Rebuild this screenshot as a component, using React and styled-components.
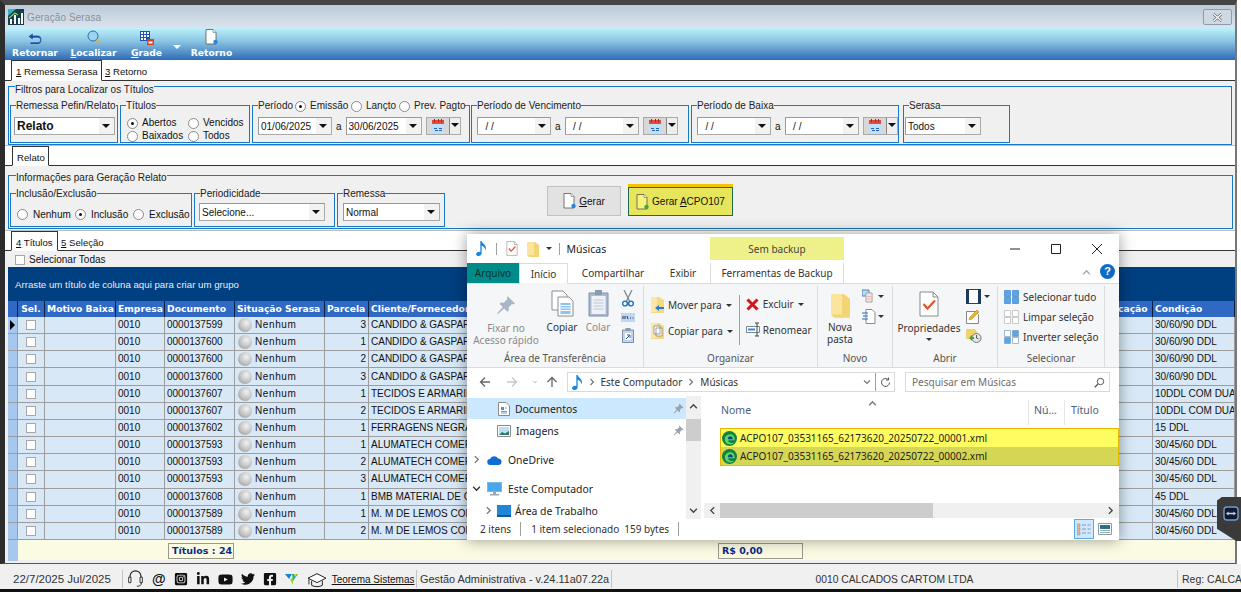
import React from 'react';
import styled, { createGlobalStyle } from 'styled-components';
import { FaLinkedinIn, FaYoutube, FaTwitter, FaFacebookSquare, FaInstagramSquare } from 'react-icons/fa';

const Global = createGlobalStyle`
  html, body { margin: 0; padding: 0; background: #fff; }
  * { box-sizing: border-box; }
  body { font-family: "Liberation Sans", Arial, sans-serif; font-size: 10px; color: #111; }
`;

const columns = '10px 27px 71px 49px 70px 90px 44px 251px 98px 86px 275px 74px 82px';

const rows = [
  ['0000137599', 3, 'CANDIDO & GASPAR LTDA', '30/60/90 DDL'],
  ['0000137600', 1, 'CANDIDO & GASPAR LTDA', '30/60/90 DDL'],
  ['0000137600', 2, 'CANDIDO & GASPAR LTDA', '30/60/90 DDL'],
  ['0000137600', 3, 'CANDIDO & GASPAR LTDA', '30/60/90 DDL'],
  ['0000137607', 1, 'TECIDOS E ARMARINHOS', '10DDL COM DUAS'],
  ['0000137607', 2, 'TECIDOS E ARMARINHOS', '10DDL COM DUAS'],
  ['0000137602', 1, 'FERRAGENS NEGRAO', '15 DDL'],
  ['0000137593', 1, 'ALUMATECH COMERCIO', '30/45/60 DDL'],
  ['0000137593', 2, 'ALUMATECH COMERCIO', '30/45/60 DDL'],
  ['0000137593', 3, 'ALUMATECH COMERCIO', '30/45/60 DDL'],
  ['0000137608', 1, 'BMB MATERIAL DE CONSTRUCAO', '45 DDL'],
  ['0000137589', 1, 'M. M DE LEMOS COMERCIO', '30/45/60 DDL'],
  ['0000137589', 2, 'M. M DE LEMOS COMERCIO', '30/45/60 DDL'],
];

const headers = ['', 'Sel.', 'Motivo Baixa', 'Empresa', 'Documento', 'Situação Serasa', 'Parcela', 'Cliente/Fornecedor', 'Vencimento', 'Valor', 'Observação', 'Classificação', 'Condição'];

/* ---------- icons ---------- */
const ReturnIcon = () => (
  <svg width="16" height="13" viewBox="0 0 16 13">
    <path d="M6 1 1 4.500 6 8V6h5a2 2 0 0 1 0 4H3v2.500h8a4.700 4.700 0 0 0 0-9.200H6z" fill="#1c4fa8" stroke="#dff" strokeWidth=".4" />
  </svg>
);
const SearchIcon = () => (
  <svg width="14" height="15" viewBox="0 0 14 15">
    <circle cx="6" cy="6" r="5" fill="#9fd2f2" stroke="#2d6ea8" />
    <path d="M9.500 9.800 13 13.800" stroke="#d9b13a" strokeWidth="2" />
  </svg>
);
const GridIcon = () => (
  <svg width="14" height="14" viewBox="0 0 14 14">
    <path d="M0 0h10v10H0z" fill="#1d55b5" />
    <path d="M1 1h2v2H1zM4 1h2v2H4zM7 1h2v2H7zM1 4h2v2H1zM4 4h2v2H4zM7 4h2v2H7zM1 7h2v2H1zM4 7h2v2H4z" fill="#fff" />
    <path d="M7 8h7v6H7z" fill="#e04020" />
    <path d="M8.500 10.500h4v2h-4z" fill="#fff" />
  </svg>
);
const DocIcon = ({ fill = '#fff', dot = '#2a86d8' }) => (
  <svg width="13" height="16" viewBox="0 0 13 16">
    <path d="M1 .5h7l3 3V15H1z" fill={fill} stroke="#555" strokeWidth=".8" />
    <path d="M8 .5v3h3" fill="#eee" stroke="#777" strokeWidth=".6" />
    <circle cx="10.500" cy="13" r="2.200" fill={dot} />
  </svg>
);
const CalendarIcon = () => (
  <svg width="14" height="14" viewBox="0 0 14 14">
    <path d="M1 1h12v13H1z" fill="#bfe0f8" />
    <path d="M1 1h12v4H1z" fill="#e14b3b" />
    <path d="M3 0h1v3H3zM7 0h1v3H7zM10 0h1v3h-1z" fill="#a22" />
    <path d="M3 9h3v1H3zM8 9h3v1H8zM4 11h3v1H4zM8 11h3v1H8z" fill="#2262b8" />
  </svg>
);
const LogoIcon = () => (
  <svg width="16" height="16" viewBox="0 0 16 16">
    <path d="M0 0h16v16H0z" fill="#15414f" />
    <path d="M0 0h8L0 7z" fill="#2fb6c9" />
    <path d="M2 10h2v5H2zM6 6h2v9H6zM10 9h2v6h-2zM13 4h2v11h-2z" fill="#fff" />
    <path d="M1 9l6-5 3 2" stroke="#8bd43c" strokeWidth="1.200" fill="none" />
  </svg>
);
const CloseGlyph = () => (
  <svg width="11" height="9" viewBox="0 0 11 9">
    <path d="M1.500 1 9.500 8M9.500 1l-8 7" stroke="#666" strokeWidth="2.600" />
    <path d="M1.500 1 9.500 8M9.500 1l-8 7" stroke="#fff" strokeWidth="1.200" />
  </svg>
);
const NoteIcon = ({ size = 16 }) => (
  <svg width={size * 0.7} height={size} viewBox="0 0 11 16">
    <path d="M4.500 0h1.400c.3 2.500 4.600 3.500 4.600 7.500 0 1-.3 1.700-.7 2.300.1-3-2.200-4-3.900-4.800V13c0 1.700-1.500 3-3.200 3C1.200 16 0 15.200 0 14c0-1.400 1.500-2.600 3-2.600.5 0 1 .1 1.500.3z" fill="#1787e0" />
  </svg>
);
const FolderIcon = ({ w = 12, h = 16 }) => (
  <svg width={w} height={h} viewBox="0 0 12 16">
    <path d="M0 1h8l4 3v12H2L0 14z" fill="#f4d574" />
    <path d="M0 1h7v13H0z" fill="#fbe59c" />
  </svg>
);
const CheckDoc = ({ w = 12, h = 15 }) => (
  <svg width={w} height={h} viewBox="0 0 20 26">
    <path d="M1 1h13l5 5v19H1z" fill="#fff" stroke="#8a8a8a" />
    <path d="M14 1v5h5" fill="none" stroke="#8a8a8a" />
    <path d="M4.500 13l4 4.500 7.500-8" fill="none" stroke="#e4552b" strokeWidth="2.200" />
  </svg>
);
const PinIcon = ({ size = 20, color = '#a9b6c8' }) => (
  <svg width={size} height={size} viewBox="0 0 20 20">
    <path d="M11.500 1 19 8.500l-2 1-1-.5-3.500 3.500.3 3-1.300 1.300-3.300-3.300L2 19l-.8-.8 5.500-6.300L3.500 8.700 4.800 7.400l3 .3L11.300 4.200 11 3z" fill={color} />
  </svg>
);
const CopyIcon = () => (
  <svg width="23" height="27" viewBox="0 0 23 27">
    <path d="M1 1h11l4 4v15H1z" fill="#fff" stroke="#8d8d8d" />
    <path d="M7 7h11l4 4v15H7z" fill="#fff" stroke="#8d8d8d" />
    <path d="M9.500 13h10v11h-10z" fill="#8ec0f0" />
    <path d="M9.500 15.500h10M9.500 18h10M9.500 20.500h10" stroke="#fff" />
  </svg>
);
const PasteIcon = () => (
  <svg width="21" height="27" viewBox="0 0 21 27">
    <path d="M1 3h19v23H1z" fill="#a9bcd4" stroke="#7e8fa6" />
    <path d="M3.500 6h14v18h-14z" fill="#eef2f7" />
    <path d="M7 0h7v5H7z" fill="#8b9aaf" />
    <path d="M5.500 10h10M5.500 13h10M5.500 16h10M5.500 19h10" stroke="#b9c7d8" />
  </svg>
);
const ScissorsIcon = () => (
  <svg width="12" height="17" viewBox="0 0 12 17">
    <path d="M2 0 7.500 11M10 0 4.500 11" stroke="#7d8a98" strokeWidth="1.300" />
    <circle cx="3" cy="13.500" r="2.400" fill="none" stroke="#1d6fc2" strokeWidth="1.400" />
    <circle cx="9" cy="13.500" r="2.400" fill="none" stroke="#1d6fc2" strokeWidth="1.400" />
  </svg>
);
const PathIcon = () => (
  <svg width="14" height="9" viewBox="0 0 14 9">
    <path d="M0 0h14v9H0z" fill="#bcd8f3" />
    <path d="M2 3v3M4 3v3M6 3l1 3M9 5h1M11.500 5h1" stroke="#335" />
  </svg>
);
const ShortcutIcon = () => (
  <svg width="12" height="15" viewBox="0 0 12 15">
    <path d="M.5 2h11v12.500H.5z" fill="#c7d3e2" stroke="#7e8fa6" />
    <path d="M3.500 0h5v3h-5z" fill="#8b9aaf" />
    <path d="M3 5h6v7H3z" fill="#fff" />
    <path d="M4 11l3.500-3.500M5 7h3v3" stroke="#1d5fae" fill="none" />
  </svg>
);
const MoveIcon = ({ copy }) => (
  <svg width="13" height="16" viewBox="0 0 13 16">
    <path d="M0 0h8l5 3v13H0z" fill="#f6d97e" />
    <path d="M0 0h6v15H0z" fill="#fbe7a6" />
    {copy ? (
      <path d="M3 3h6v8H3zM5 5h6v8H5z" fill="#fff" stroke="#778" strokeWidth=".7" />
    ) : (
      <path d="M4 11l4-3v2h5v2H8v2z" fill="#1f7fd6" />
    )}
  </svg>
);
const DeleteIcon = () => (
  <svg width="13" height="13" viewBox="0 0 13 13">
    <path d="M1.500 1.500l10 10M11.500 1.500l-10 10" stroke="#d4141c" strokeWidth="3" />
  </svg>
);
const RenameIcon = () => (
  <svg width="15" height="15" viewBox="0 0 15 15">
    <path d="M.5 4.500h13v6H.5z" fill="#fff" stroke="#7a8794" />
    <path d="M2 6.500h7v2H2z" fill="#3d8bd8" />
    <path d="M9 1h4M11 1v13M9 14h4" stroke="#444" />
  </svg>
);
const SmallCopy = () => (
  <svg width="14" height="14" viewBox="0 0 14 14">
    <path d="M0 1h7v6H0z" fill="#bcdcf6" stroke="#2a6fb5" strokeWidth=".8" />
    <path d="M4 4h6v9H4z" fill="#fff" stroke="#8a8a8a" strokeWidth=".8" />
    <path d="M6 5v7M8 5v7M4.500 7.500h5M4.500 10h5" stroke="#e8a0a0" strokeWidth=".6" />
  </svg>
);
const SmallDoc = () => (
  <svg width="14" height="15" viewBox="0 0 14 15">
    <path d="M4 .5h6l3 3V14.500H4z" fill="#fff" stroke="#8a8a8a" />
    <path d="M0 4h6M1 7h5M0 10h6" stroke="#2070c0" strokeWidth="1" />
  </svg>
);
const SelectBookIcon = () => (
  <svg width="15" height="15" viewBox="0 0 15 15">
    <path d="M.5.500h14v14H.5z" fill="#fff" stroke="#2b3f5c" />
    <path d="M0 0h3v15H0zM12 0h3v15h-3z" fill="#1e3a5f" />
  </svg>
);
const EditIcon = () => (
  <svg width="14" height="15" viewBox="0 0 14 15">
    <path d="M.5 2.500h9l3 3v9H.5z" fill="#fff" stroke="#888" />
    <path d="M3 11l1-3 7-7 2 2-7 7z" fill="#f0b42c" stroke="#b07d10" strokeWidth=".5" />
  </svg>
);
const HistoryIcon = () => (
  <svg width="16" height="14" viewBox="0 0 16 14">
    <path d="M0 0h9l2 3v7H0z" fill="#f1d36d" />
    <circle cx="10.500" cy="9" r="4.500" fill="#e6e6e6" stroke="#777" />
    <path d="M10.500 6v3l2 1" stroke="#555" fill="none" />
    <path d="M3 9l3-3v2h2v2H6v2z" fill="#3fa33f" />
  </svg>
);
const SelectGrid = ({ a = '#5aa5e6', b = '#5aa5e6', c = '#5aa5e6', d = '#5aa5e6', line = '#3c86cf' }) => (
  <svg width="15" height="14" viewBox="0 0 15 14">
    <path d="M.5.500h6v6h-6z" fill={a} stroke={line} strokeWidth=".7" />
    <path d="M8.500.500h6v6h-6z" fill={b} stroke={line} strokeWidth=".7" />
    <path d="M.5 7.500h6v6h-6z" fill={c} stroke={line} strokeWidth=".7" />
    <path d="M8.500 7.500h6v6h-6z" fill={d} stroke={line} strokeWidth=".7" />
  </svg>
);
const ArrowBack = ({ color = '#666', rotate = 0 }) => (
  <svg width="12" height="12" viewBox="0 0 12 12" style={{ transform: `rotate(${rotate}deg)` }}>
    <path d="M11 6H1.500M6 1.500 1.500 6 6 10.500" fill="none" stroke={color} strokeWidth="1.300" />
  </svg>
);
const Chevron = ({ rotate = 0, size = 8, color = '#777' }) => (
  <svg width={size} height={size} viewBox="0 0 8 8" style={{ transform: `rotate(${rotate}deg)` }}>
    <path d="M2.500 1 5.500 4 2.500 7" fill="none" stroke={color} strokeWidth="1.200" />
  </svg>
);
const RefreshIcon = () => (
  <svg width="11" height="11" viewBox="0 0 11 11">
    <path d="M9.500 5.500a4 4 0 1 1-1.300-3M8.500.5v2.500H6" fill="none" stroke="#555" strokeWidth="1" />
  </svg>
);
const MagnifyIcon = () => (
  <svg width="11" height="11" viewBox="0 0 11 11">
    <circle cx="6.500" cy="4.500" r="3.200" fill="none" stroke="#555" />
    <path d="M4 7 .8 10.200" stroke="#555" strokeWidth="1.300" />
  </svg>
);
const DocsNavIcon = () => (
  <svg width="12" height="14" viewBox="0 0 12 14">
    <path d="M.5.500h7.500l3.500 3.500v9.500H.5z" fill="#fff" stroke="#8a8a8a" />
    <path d="M3 5h3v3H3z" fill="#3d97e0" />
    <path d="M3 9.500h6M3 11h6M7 6h2" stroke="#5aa5e6" />
  </svg>
);
const PictureIcon = () => (
  <svg width="14" height="12" viewBox="0 0 14 12">
    <path d="M.5.500h13v11H.5z" fill="#fff" stroke="#8a8a8a" />
    <path d="M2 2h10v8H2z" fill="#bfe0f4" />
    <path d="M2 10l3-3 3 1.500L12 6v4z" fill="#2f7b6a" />
  </svg>
);
const CloudIcon = () => (
  <svg width="15" height="10" viewBox="0 0 15 10">
    <path d="M3.500 10a3 3 0 0 1-.5-6A4.500 4.500 0 0 1 11 3.500 3.300 3.300 0 0 1 12 10z" fill="#0a6fd0" />
  </svg>
);
const MonitorIcon = () => (
  <svg width="15" height="14" viewBox="0 0 15 14">
    <path d="M0 0h15v10H0z" fill="#78b8ec" />
    <path d="M1 1h13v8H1z" fill="#4aa7ec" />
    <path d="M6 10h3v2H6zM3 12h9v1.500H3z" fill="#9aa6b2" />
  </svg>
);
const DesktopIcon = () => (
  <svg width="14" height="12" viewBox="0 0 14 12">
    <path d="M0 0h14v10H0z" fill="#1f86d8" />
    <path d="M0 10h14v2H0z" fill="#0b5a9e" />
  </svg>
);
const EdgeIcon = () => (
  <svg width="15" height="15" viewBox="0 0 15 15">
    <circle cx="7.500" cy="7.500" r="7.500" fill="#12823c" />
    <path d="M12.500 9.300c.8-2.800-.8-5.300-3.300-6C6.700 2.700 4 4 3 6.500 2.200 9 3.400 12 6 13c2.500 1 5 .2 6.300-1.500-2.400 1-5 .5-5.800-1-.4-.8-.2-1.200.3-1.200z" fill="#5fd36b" />
    <path d="M6 8.200c-.2-2 1.300-3 2.800-2.800 1.400.2 2.200 1.300 2 2.800z" fill="#0b4a86" />
  </svg>
);
const DetailsIcon = () => (
  <svg width="14" height="13" viewBox="0 0 14 13">
    <path d="M0 1h3v3H0zM0 5h3v3H0zM0 9h3v3H0z" fill="#e2b7a3" stroke="#9a8a80" strokeWidth=".5" />
    <path d="M5 2h4M5 6h4M5 10h4M10.500 2h3M10.500 6h3M10.500 10h3" stroke="#8a97a6" />
  </svg>
);
const LargeIcon = () => (
  <svg width="14" height="12" viewBox="0 0 14 12">
    <path d="M.5.500h13v11H.5z" fill="#fff" stroke="#8a9aaa" />
    <path d="M2 2h10v4H2z" fill="#2a6f8f" />
    <path d="M2 7.500h10M2 9.500h10" stroke="#9aa" />
  </svg>
);
const HeadsetIcon = () => (
  <svg width="17" height="20" viewBox="0 0 17 22">
    <path d="M2.500 12V8a6 6 0 0 1 12 0v4" fill="none" stroke="#222" strokeWidth="1.300" />
    <path d="M1 9h2.500v6H1zM13.500 9H16v6h-2.500z" fill="#fff" stroke="#222" />
    <path d="M15 15c0 3-2 4-5 4" fill="none" stroke="#222" />
  </svg>
);
const TeoremaLogo = () => (
  <svg width="13" height="11" viewBox="0 0 13 11">
    <path d="M0 0h7L4 5z" fill="#0f86d8" />
    <path d="M7 0h6L8 7z" fill="#15b3a0" />
    <path d="M5 5l3-1 0 7z" fill="#9cc92e" />
    <path d="M9 0h3l-2 3z" fill="#f0d020" />
  </svg>
);
const CapIcon = () => (
  <svg width="22" height="17" viewBox="0 0 22 19">
    <path d="M11 3 1 8l10 5 10-5z" fill="#fff" stroke="#222" strokeWidth="1.100" />
    <path d="M5 11v5c3 2 9 2 12 0v-5" fill="none" stroke="#222" strokeWidth="1.100" />
    <path d="M2 9v6" stroke="#222" />
  </svg>
);
const ViewerIcon = () => (
  <svg width="16" height="15" viewBox="0 0 16 15">
    <rect x="1" y="1" width="14" height="13" rx="3" fill="#101a2c" stroke="#6f9bcf" strokeWidth="1.400" />
    <path d="M3 7.500 5.500 5.500v1.200h5V5.500L13 7.500l-2.500 2V8.300h-5v1.200z" fill="#c3d4ea" />
  </svg>
);

/* ---------- main window ---------- */
const Screen = styled.div`
  position: relative;
  width: 1241px;
  height: 592px;
  overflow: hidden;
  background: #fff;
  display: flex;
  flex-direction: column;
`;
const Win = styled.div`
  width: 1237px;
  height: 564px;
  flex: none;
  border-top: 5px solid #444;
  border-left: 5px solid #2c2c2c;
  border-right: 2px solid #777;
  border-bottom: 1px solid #555;
  background: #f0f0f0;
  display: flex;
  flex-direction: column;
`;
const TitleBar = styled.div`
  height: 23px;
  flex: none;
  background: linear-gradient(#bccad7, #dae4ee);
  display: flex;
  align-items: center;
  padding: 1px 3px 0 3px;
  color: #8a9098;
  gap: 3px;
`;
const TitleText = styled.span`
  font-size: 10px;
  letter-spacing: 0.1px;
  flex: 1;
`;
const CloseBtn = styled.div`
  width: 29px;
  height: 16px;
  border: 1px solid #8c9db0;
  border-radius: 2px;
  background: #ced9e4;
  display: flex;
  align-items: center;
  justify-content: center;
`;
const Toolbar = styled.div`
  height: 32px;
  flex: none;
  background: linear-gradient(#bdf1fb, #8cc6e4 40%, #2e6bb6);
  display: flex;
  padding-left: 7px;
`;
const ToolItem = styled.div`
  width: ${p => p.$w}px;
  margin-right: ${p => p.$mr || 0}px;
  display: flex;
  flex-direction: column;
  align-items: center;
  justify-content: flex-end;
  gap: 2px;
  height: 30px;
  color: #fff;
  font: bold 9.200px "DejaVu Sans", sans-serif;
  white-space: nowrap;
  u { text-decoration-thickness: 1px; }
`;
const DropMark = styled.div`
  width: 0;
  height: 0;
  border-left: 4px solid transparent;
  border-right: 4px solid transparent;
  border-top: 4px solid #fff;
  margin: 17px 10px 0 0;
`;
const TabStrip = styled.div`
  height: ${p => p.$h}px;
  flex: none;
  background: #fff;
  border-bottom: 1px solid #333;
  display: flex;
  align-items: flex-end;
  padding-left: ${p => p.$left}px;
  gap: ${p => p.$gap || 0}px;
`;
const Tab = styled.div`
  height: ${p => (p.$active ? 'calc(100% + 1px)' : '100%')};
  margin-bottom: ${p => (p.$active ? '-1px' : '0')};
  width: ${p => p.$w}px;
  padding: ${p => (p.$active ? '3px 0 0 4px' : '4px 0 0 0')};
  font-size: 9.600px;
  white-space: nowrap;
  line-height: 15px;
  background: #fff;
  border: ${p => (p.$active ? '1px solid #333' : 'none')};
  border-bottom: ${p => (p.$active ? '1px solid #fff' : 'none')};
`;
const Panel = styled.div`
  height: 65px;
  flex: none;
  background: #f0f0f0;
  border-bottom: 1px solid #bbb;
  padding: 0 2px 0 3px;
`;
const Group = styled.fieldset`
  margin: ${p => p.$mt || 0}px 0 0 ${p => p.$ml || 0}px;
  padding: ${p => p.$pad || '0'};
  width: ${p => p.$w}px;
  height: ${p => p.$h}px;
  min-width: 0;
  flex: none;
  border: 1.500px solid #1878c8;
`;
const Legend = styled.legend`
  padding: 0;
  margin-left: ${p => p.$ml || 5}px;
  font-size: 10px;
  height: ${p => p.$h || 13}px;
  line-height: ${p => p.$lh || 14}px;
  color: #222;
  white-space: nowrap;
`;
const RowBoxes = styled.div`
  display: flex;
  gap: 2px;
  padding-top: ${p => p.$top || 0}px;
  align-items: flex-start;
`;
const Combo = styled.div`
  width: ${p => p.$w}px;
  height: 18px;
  flex: none;
  background: #fff;
  border: 1px solid #aaa;
  border-top-color: #999;
  border-left-color: #999;
  display: flex;
  align-items: center;
  justify-content: space-between;
  padding-left: 2px;
  font-size: ${p => (p.$bold ? 12 : 10)}px;
  font-weight: ${p => (p.$bold ? 'bold' : 'normal')};
  white-space: pre;
`;
const ComboArrow = styled.div`
  width: 15px;
  height: 16px;
  background: #f2f2f2;
  position: relative;
  &:after {
    content: '';
    position: absolute;
    left: 3px;
    top: 6px;
    border-left: 4px solid transparent;
    border-right: 4px solid transparent;
    border-top: 4px solid #111;
  }
`;
const DateSep = styled.span`
  font-size: 10px;
`;
const DateRow = styled.div`
  display: flex;
  align-items: center;
  gap: 4px;
  padding: ${p => p.$top ?? 5}px 0 0 ${p => p.$left || 5}px;
`;
const CalBtn = styled.div`
  width: 35px;
  height: 18px;
  flex: none;
  background: #d8d8d8;
  border: 1px solid #aaa;
  display: flex;
`;
const CalFace = styled.div`
  width: 23px;
  display: flex;
  align-items: center;
  justify-content: center;
  border-right: 1px solid #888;
`;
const CalArrow = styled.div`
  flex: 1;
  background: #eee;
  position: relative;
  &:after {
    content: '';
    position: absolute;
    left: 1px;
    top: 5px;
    border-left: 4px solid transparent;
    border-right: 4px solid transparent;
    border-top: 4px solid #111;
  }
`;
const RadioLabel = styled.span`
  display: inline-flex;
  align-items: center;
  gap: ${p => p.$gap || 4}px;
  font-size: 10px;
  white-space: nowrap;
`;
const RadioDot = styled.i`
  width: 11px;
  height: 11px;
  flex: none;
  display: inline-block;
  border-radius: 50%;
  background: #fff;
  border: 1px solid #8a8a8a;
  position: relative;
  &:after {
    content: '';
    display: ${p => (p.$on ? 'block' : 'none')};
    position: absolute;
    left: 3px;
    top: 3px;
    width: 3px;
    height: 3px;
    border-radius: 50%;
    background: #111;
  }
`;
const Radio = ({ on, gap, children }) => (
  <RadioLabel $gap={gap}>
    <RadioDot $on={on} />
    {children}
  </RadioLabel>
);
const RadioGrid = styled.div`
  display: grid;
  grid-template-columns: 61px 1fr;
  row-gap: 1px;
  padding: 5px 0 0 6px;
  line-height: 12px;
`;
const RadioRow = styled.div`
  display: grid;
  grid-template-columns: 58px 58px 1fr;
  padding: 9px 0 0 6px;
`;
const LegendRadios = styled.span`
  display: inline-grid;
  grid-template-columns: 37px 56px 48px 66px;
  align-items: center;
`;
const Action = styled.div`
  height: ${p => (p.$hot ? 29 : 30)}px;
  width: ${p => p.$w}px;
  flex: none;
  margin: ${p => p.$mt}px 0 0 ${p => p.$ml}px;
  display: flex;
  align-items: center;
  justify-content: center;
  gap: 3px;
  font-size: 10px;
  background: ${p => (p.$hot ? '#e7e55c' : '#e2e2e2')};
  border: ${p => (p.$hot ? '1.500px solid #1d6b4f' : '1.500px solid #c2c2c2')};
  box-shadow: ${p => (p.$hot ? '0 -3px 0 #f4c400' : 'none')};
  u { text-decoration-thickness: 1px; }
`;
const CheckRow = styled.div`
  height: 16px;
  flex: none;
  display: flex;
  align-items: center;
  gap: 4px;
  padding: 1px 0 0 10px;
  background: #f0f0f0;
  font-size: 10px;
`;
const Box = styled.i`
  width: 10px;
  height: 10px;
  display: inline-block;
  background: #fff;
  border: 1px solid #a8a8a8;
`;

/* ---------- grid ---------- */
const DataGrid = styled.div`
  flex: none;
  margin-left: 3px;
  width: 1227px;
`;
const GroupBand = styled.div`
  height: 34px;
  background: #003f80;
  color: #e8eef6;
  font-size: 9.700px;
  display: flex;
  align-items: center;
  padding: 0 7px;
`;
const Row = styled.div`
  display: grid;
  grid-template-columns: ${columns};
  height: ${p => p.$h}px;
`;
const HeadCell = styled.div`
  background: #2f69c4;
  color: #fff;
  font: bold 9.200px "DejaVu Sans", sans-serif;
  line-height: 16px;
  border-right: 1px solid #0b1c3c;
  padding: 0 2px;
  overflow: hidden;
  white-space: nowrap;
  text-align: ${p => p.$align || 'left'};
`;
const Cell = styled.div`
  background: ${p => p.$bg || '#d8e8f6'};
  border-right: 1px solid #9d9d9d;
  border-bottom: 1px solid #9d9d9d;
  font-size: 10px;
  line-height: 16px;
  padding: 0 2px;
  overflow: hidden;
  white-space: nowrap;
  display: flex;
  align-items: center;
  justify-content: ${p => p.$justify || 'flex-start'};
  gap: 3px;
`;
const Ball = styled.i`
  width: 14px;
  height: 14px;
  flex: none;
  margin-left: 1px;
  border-radius: 50%;
  background: radial-gradient(circle at 60% 35%, #f2f2f2, #c0c0c0 55%, #8c8c8c);
`;
const BallLabel = styled.span`
  letter-spacing: 0.6px;
`;
const Pointer = styled.i`
  border-top: 5px solid transparent;
  border-bottom: 5px solid transparent;
  border-left: 5px solid #000;
`;
const FootBar = styled.div`
  display: grid;
  grid-template-columns: ${columns};
  height: 20px;
  background: #fbfbe3;
`;
const FootStub = styled.div`
  background: #a6c8ee;
`;
const FootBox = styled.div`
  grid-column: ${p => p.$col};
  margin: 3px 1px 2px ${p => p.$ml}px;
  background: #fbfbe3;
  border: 1px solid #9a9a8a;
  color: #0b2a86;
  font: bold 9.500px "DejaVu Sans", sans-serif;
  line-height: 14px;
  padding: 0 3px;
  white-space: nowrap;
  text-align: ${p => p.$align || 'left'};
`;

/* ---------- status bar ---------- */
const StatusBar = styled.div`
  height: 25px;
  flex: none;
  background: #f0f0f0;
  display: flex;
  align-items: flex-end;
  padding-bottom: 1px;
`;
const StatusCell = styled.div`
  width: ${p => p.$w}px;
  height: 18px;
  flex: ${p => (p.$w ? 'none' : 1)};
  display: flex;
  align-items: center;
  justify-content: ${p => p.$justify || 'flex-start'};
  padding-left: ${p => p.$left || 0}px;
  gap: ${p => p.$gap || 0}px;
  border-right: ${p => (p.$line ? '1px solid #c4c4c4' : 'none')};
  white-space: nowrap;
  overflow: hidden;
  font-size: ${p => p.$size || 11}px;
  color: ${p => p.$color || '#333'};
`;
const AtSign = styled.span`
  font: bold 14px "Liberation Sans", sans-serif;
`;
const TeoremaLink = styled.u`
  color: #111;
  font-size: 10px;
  margin-left: -4px;
`;
const BlackEdge = styled.div`
  flex: 1;
  background: #111;
`;

/* ---------- explorer window ---------- */
const Explorer = styled.div`
  position: absolute;
  left: 467px;
  top: 234px;
  width: 652px;
  height: 306px;
  background: #fff;
  box-shadow: 0 0 14px rgba(0, 0, 0, 0.4);
  font-family: "Noto Sans", "Open Sans", sans-serif;
  font-size: 10px;
  color: #333;
  display: flex;
  flex-direction: column;
`;
const ExTitle = styled.div`
  height: 29px;
  flex: none;
  display: flex;
  align-items: center;
  padding-left: 9px;
  position: relative;
`;
const VLine = styled.i`
  width: 1px;
  height: ${p => p.$h || 12}px;
  background: #a0a0a0;
  margin: 0 ${p => p.$m || 0}px;
  flex: none;
`;
const Spacer = styled.span`
  width: ${p => p.$w}px;
  flex: none;
`;
const TitleCaption = styled.span`
  font-size: 10.500px;
  color: #222;
`;
const MiniDrop = styled.i`
  display: inline-block;
  border-left: 3px solid transparent;
  border-right: 3px solid transparent;
  border-top: 3px solid #333;
  flex: none;
  margin-top: ${p => p.$mt || 0}px;
`;
const ContextBand = styled.div`
  position: absolute;
  left: 243px;
  top: 3px;
  width: 134px;
  height: 23px;
  background: #eef08a;
  display: flex;
  align-items: center;
  justify-content: center;
  color: #444;
`;
const WinButtons = styled.div`
  position: absolute;
  right: 2px;
  top: 0;
  height: 29px;
  display: flex;
  align-items: center;
`;
const WinBtn = styled.div`
  width: 41px;
  display: flex;
  justify-content: center;
`;
const ExTabs = styled.div`
  height: 21px;
  flex: none;
  display: flex;
  align-items: flex-end;
  border-bottom: 1px solid #dadbdc;
  position: relative;
`;
const ExTab = styled.div`
  width: ${p => p.$w}px;
  height: ${p => (p.$active ? 21 : 20)}px;
  margin-bottom: ${p => (p.$active ? -1 : 0)}px;
  margin-left: ${p => p.$ml || 0}px;
  background: ${p => (p.$file ? '#008b8b' : '#fff')};
  color: ${p => (p.$file ? '#07332f' : '#333')};
  border: ${p => (p.$active ? '1px solid #dadbdc' : 'none')};
  border-bottom: ${p => (p.$active ? '1px solid #f5f6f7' : 'none')};
  display: flex;
  align-items: center;
  justify-content: center;
  white-space: nowrap;
`;
const ContextTab = styled.div`
  position: absolute;
  left: 243px;
  bottom: 0;
  width: 134px;
  height: 20px;
  border-left: 1px solid #ddd;
  border-right: 1px solid #ddd;
  display: flex;
  align-items: center;
  justify-content: center;
`;
const HelpDot = styled.div`
  position: absolute;
  right: 4px;
  top: 1px;
  width: 15px;
  height: 15px;
  border-radius: 50%;
  background: #0a6cc4;
  color: #fff;
  font: bold 11px "Liberation Sans", sans-serif;
  text-align: center;
  line-height: 15px;
`;
const CollapseMark = styled.div`
  position: absolute;
  right: 28px;
  top: 3px;
`;
const Ribbon = styled.div`
  height: 84px;
  flex: none;
  background: #f5f6f7;
  border-bottom: 1px solid #dadbdc;
  display: flex;
  padding-top: 2px;
`;
const RibGroup = styled.div`
  width: ${p => p.$w}px;
  flex: none;
  border-right: 1px solid #dcdcdc;
  display: flex;
  flex-direction: column;
  height: 81px;
`;
const RibBody = styled.div`
  flex: 1;
  display: flex;
  padding: ${p => p.$pad || '4px 0 0 0'};
  min-height: 0;
`;
const RibCaption = styled.div`
  text-align: center;
  color: #555;
  line-height: 13px;
  height: 15px;
`;
const BigButton = styled.div`
  width: ${p => p.$w}px;
  flex: none;
  display: flex;
  flex-direction: column;
  align-items: center;
  text-align: center;
  line-height: 12px;
  color: ${p => (p.$dim ? '#8a8a8a' : '#333')};
  svg {
    margin-top: ${p => p.$iconTop || 0}px;
    margin-bottom: ${p => p.$iconGap || 4}px;
  }
`;
const IconStack = styled.div`
  display: flex;
  flex-direction: column;
  align-items: ${p => p.$align || 'center'};
  gap: ${p => p.$gap || 4}px;
  width: ${p => p.$w}px;
  margin: ${p => p.$top || 0}px 0 0 ${p => p.$left || 0}px;
  flex: none;
`;
const StackRow = styled.div`
  display: flex;
  align-items: center;
  gap: ${p => p.$gap || 4}px;
  white-space: nowrap;
  height: ${p => (p.$h ? `${p.$h}px` : 'auto')};
`;
const RibColumn = styled.div`
  display: flex;
  flex-direction: column;
  gap: ${p => p.$gap || 6}px;
  padding-top: ${p => p.$top || 0}px;
`;
const Address = styled.div`
  height: 28px;
  flex: none;
  display: flex;
  align-items: center;
  padding-left: 11px;
`;
const NavBtn = styled.div`
  width: ${p => p.$w}px;
  flex: none;
  display: flex;
  justify-content: center;
`;
const PathBox = styled.div`
  width: 328px;
  height: 20px;
  border: 1px solid #d9d9d9;
  display: flex;
  align-items: center;
  padding-left: 4px;
  gap: 5px;
  color: #333;
`;
const PathEnd = styled.div`
  margin-left: auto;
  display: flex;
  align-items: center;
  height: 100%;
`;
const SearchBox = styled.div`
  width: 205px;
  height: 20px;
  margin-left: 10px;
  border: 1px solid #d9d9d9;
  display: flex;
  align-items: center;
  justify-content: space-between;
  padding: 0 4px 0 6px;
  color: #6d6d6d;
`;
const ExBody = styled.div`
  height: 123px;
  flex: none;
  display: flex;
`;
const NavPane = styled.div`
  width: 219px;
  flex: none;
  padding-top: 2px;
  overflow: hidden;
  font-size: 10.400px;
`;
const NavRow = styled.div`
  height: 21px;
  margin-top: ${p => p.$mt || 0}px;
  background: ${p => (p.$sel ? '#cce8ff' : 'transparent')};
  padding-left: ${p => p.$left}px;
  display: flex;
  align-items: center;
  gap: ${p => p.$gap || 5}px;
  color: #222;
  white-space: nowrap;
`;
const NavPin = styled.span`
  margin-left: auto;
  margin-right: 2px;
  display: flex;
`;
const VScroll = styled.div`
  width: 15px;
  flex: none;
  background: #f0f0f0;
  display: flex;
  flex-direction: column;
  align-items: center;
  padding: 6px 0 4px;
`;
const VThumb = styled.div`
  width: 100%;
  height: 22px;
  margin-top: 8px;
  margin-bottom: auto;
  background: #cdcdcd;
`;
const Files = styled.div`
  flex: 1;
  margin-left: 3px;
  display: flex;
  flex-direction: column;
  min-width: 0;
`;
const FileHead = styled.div`
  height: 32px;
  flex: none;
  display: flex;
  position: relative;
  color: #4c607a;
  font-size: 10.500px;
`;
const ColName = styled.div`
  width: ${p => p.$w}px;
  flex: none;
  padding-left: ${p => p.$left}px;
  border-right: ${p => (p.$line ? '1px solid #e5e5e5' : 'none')};
  height: 25px;
  margin-top: 4px;
  line-height: 20px;
  white-space: nowrap;
`;
const SortMark = styled.div`
  position: absolute;
  left: 164px;
  top: 1px;
`;
const FileList = styled.div`
  margin-left: 16px;
  border: 1px solid #e8b800;
  flex: none;
`;
const FileRow = styled.div`
  height: 18px;
  background: ${p => (p.$sel ? '#d6d655' : '#fdfd62')};
  display: flex;
  align-items: center;
  gap: 3px;
  padding-left: 1px;
  color: #222;
  white-space: nowrap;
`;
const HScroll = styled.div`
  height: 15px;
  flex: none;
  margin-top: auto;
  margin-bottom: 1px;
  background: #f0f0f0;
  display: flex;
  align-items: center;
  justify-content: space-between;
  padding: 0 4px;
  position: relative;
`;
const HThumb = styled.div`
  position: absolute;
  left: 16px;
  top: 0;
  width: 213px;
  height: 100%;
  background: #cdcdcd;
`;
const ExStatus = styled.div`
  flex: 1;
  display: flex;
  align-items: center;
  padding: 0 0 2px 13px;
  color: #333;
  position: relative;
`;
const StatusTail = styled.span`
  margin-left: ${p => p.$ml}px;
`;
const ViewBtns = styled.div`
  margin-left: auto;
  margin-right: 7px;
  display: flex;
  align-items: center;
  gap: 3px;
`;
const ViewBtn = styled.div`
  width: ${p => (p.$on ? 20 : 15)}px;
  height: 20px;
  background: ${p => (p.$on ? '#cde8ff' : 'transparent')};
  border: ${p => (p.$on ? '1px solid #5aa8e6' : 'none')};
  display: flex;
  align-items: center;
  justify-content: center;
`;
const ViewerTab = styled.div`
  position: absolute;
  right: 0;
  top: 497px;
  width: 24px;
  height: 44px;
  background: #3a3a3a;
  clip-path: polygon(20% 0, 100% 0, 100% 100%, 80% 100%, 0 72%, 0 8%);
  display: flex;
  justify-content: center;
  padding: 9px 0 0 3px;
`;

const BLANK_DATE = '\u00A0\u00A0/\u00A0/';

const DateRange = ({ from, to, toW = 74 }) => (
  <DateRow>
    <Combo $w={74}>
      {from}
      <ComboArrow />
    </Combo>
    <DateSep>a</DateSep>
    <Combo $w={toW}>
      {to}
      <ComboArrow />
    </Combo>
    <CalBtn>
      <CalFace>
        <CalendarIcon />
      </CalFace>
      <CalArrow />
    </CalBtn>
  </DateRow>
);

const RibbonPane = () => (
  <Ribbon>
    <RibGroup $w={177}>
      <RibBody>
        <BigButton $w={78} $dim $iconTop={5} $iconGap={7}>
          <PinIcon />
          <span>Fixar no<br />Acesso rápido</span>
        </BigButton>
        <BigButton $w={34}>
          <CopyIcon />
          <span>Copiar</span>
        </BigButton>
        <BigButton $w={38} $dim>
          <PasteIcon />
          <span>Colar</span>
        </BigButton>
        <IconStack $w={22} $gap={6}>
          <ScissorsIcon />
          <PathIcon />
          <ShortcutIcon />
        </IconStack>
      </RibBody>
      <RibCaption>Área de Transferência</RibCaption>
    </RibGroup>
    <RibGroup $w={174}>
      <RibBody $pad="9px 0 0 7px">
        <RibColumn $gap={10} $top={2}>
          <StackRow><MoveIcon /> Mover para <MiniDrop /></StackRow>
          <StackRow><MoveIcon copy /> Copiar para <MiniDrop /></StackRow>
        </RibColumn>
        <VLine $h={50} $m={6} />
        <RibColumn $gap={11} $top={2}>
          <StackRow><DeleteIcon /> Excluir <MiniDrop /></StackRow>
          <StackRow $gap={2}><RenameIcon /> Renomear</StackRow>
        </RibColumn>
      </RibBody>
      <RibCaption>Organizar</RibCaption>
    </RibGroup>
    <RibGroup $w={75}>
      <RibBody $pad="6px 0 0 0">
        <BigButton $w={44} $iconGap={3}>
          <FolderIcon w={19} h={26} />
          <span>Nova<br />pasta</span>
        </BigButton>
        <IconStack $w={22} $gap={6} $align="flex-start" $top={-3}>
          <StackRow $gap={2}><SmallCopy /><MiniDrop /></StackRow>
          <StackRow $gap={2}><SmallDoc /><MiniDrop /></StackRow>
        </IconStack>
      </RibBody>
      <RibCaption>Novo</RibCaption>
    </RibGroup>
    <RibGroup $w={105}>
      <RibBody $pad="5px 0 0 4px">
        <BigButton $w={64} $iconGap={5}>
          <CheckDoc w={20} h={26} />
          <span>Propriedades</span>
          <MiniDrop $mt={4} />
        </BigButton>
        <IconStack $w={30} $gap={5} $align="flex-start" $top={-2} $left={5}>
          <StackRow $gap={3}><SelectBookIcon /><MiniDrop /></StackRow>
          <EditIcon />
          <HistoryIcon />
        </IconStack>
      </RibBody>
      <RibCaption>Abrir</RibCaption>
    </RibGroup>
    <RibGroup $w={107}>
      <RibBody $pad="4px 0 0 6px">
        <RibColumn>
          <StackRow $h={14}><SelectGrid /> Selecionar tudo</StackRow>
          <StackRow $h={14}><SelectGrid a="#fff" b="#fff" c="#fff" d="#fff" line="#b5b5b5" /> Limpar seleção</StackRow>
          <StackRow $h={14}><SelectGrid a="#fff" b="#5aa5e6" c="#5aa5e6" d="#fff" line="#7a9cc0" /> Inverter seleção</StackRow>
        </RibColumn>
      </RibBody>
      <RibCaption>Selecionar</RibCaption>
    </RibGroup>
  </Ribbon>
);

const ExplorerWindow = () => (
  <Explorer>
    <ExTitle>
      <NoteIcon size={15} />
      <VLine $m={9} />
      <CheckDoc />
      <Spacer $w={9} />
      <FolderIcon />
      <Spacer $w={7} />
      <MiniDrop />
      <VLine $m={7} />
      <TitleCaption>Músicas</TitleCaption>
      <ContextBand>Sem backup</ContextBand>
      <WinButtons>
        <WinBtn><svg width="10" height="10"><path d="M0 5h10" stroke="#222" /></svg></WinBtn>
        <WinBtn><svg width="10" height="10"><path d="M.5.500h9v9h-9z" fill="none" stroke="#222" /></svg></WinBtn>
        <WinBtn><svg width="10" height="10"><path d="M0 0l10 10M10 0 0 10" stroke="#222" /></svg></WinBtn>
      </WinButtons>
    </ExTitle>
    <ExTabs>
      <ExTab $w={52} $file>Arquivo</ExTab>
      <ExTab $w={49} $active>Início</ExTab>
      <ExTab $w={62} $ml={14}>Compartilhar</ExTab>
      <ExTab $w={28} $ml={25}>Exibir</ExTab>
      <ContextTab>Ferramentas de Backup</ContextTab>
      <CollapseMark><Chevron rotate={-90} size={9} color="#aaa" /></CollapseMark>
      <HelpDot>?</HelpDot>
    </ExTabs>
    <RibbonPane />
    <Address>
      <NavBtn $w={13}><ArrowBack /></NavBtn>
      <NavBtn $w={42}><ArrowBack color="#c8c8c8" rotate={180} /></NavBtn>
      <NavBtn $w={4}><Chevron rotate={90} size={6} /></NavBtn>
      <NavBtn $w={30}><ArrowBack rotate={90} /></NavBtn>
      <PathBox>
        <NoteIcon size={15} />
        <Chevron />
        <span>Este Computador</span>
        <Chevron />
        <span>Músicas</span>
        <PathEnd>
          <Chevron rotate={90} />
          <VLine $h={18} $m={4} />
          <RefreshIcon />
          <Spacer $w={3} />
        </PathEnd>
      </PathBox>
      <SearchBox>
        Pesquisar em Músicas
        <MagnifyIcon />
      </SearchBox>
    </Address>
    <ExBody>
      <NavPane>
        <NavRow $sel $left={31}>
          <DocsNavIcon />
          Documentos
          <NavPin><PinIcon size={11} color="#9aa3ad" /></NavPin>
        </NavRow>
        <NavRow $left={30} $mt={1}>
          <PictureIcon />
          Imagens
          <NavPin><PinIcon size={11} color="#9aa3ad" /></NavPin>
        </NavRow>
        <NavRow $left={5} $mt={8} $gap={6}>
          <Chevron size={9} />
          <CloudIcon />
          OneDrive
        </NavRow>
        <NavRow $left={5} $mt={8} $gap={6}>
          <Chevron rotate={90} size={9} color="#333" />
          <MonitorIcon />
          Este Computador
        </NavRow>
        <NavRow $left={17} $mt={1} $gap={4}>
          <Chevron size={9} />
          <DesktopIcon />
          Área de Trabalho
        </NavRow>
      </NavPane>
      <VScroll>
        <Chevron rotate={-90} size={9} color="#444" />
        <VThumb />
        <Chevron rotate={90} size={9} color="#444" />
      </VScroll>
      <Files>
        <FileHead>
          <ColName $w={325} $left={17} $line>Nome</ColName>
          <ColName $w={36} $left={5} $line>Nú...</ColName>
          <ColName $w={50} $left={6}>Título</ColName>
          <SortMark><Chevron rotate={-90} size={9} /></SortMark>
        </FileHead>
        <FileList>
          <FileRow><EdgeIcon /> ACPO107_03531165_62173620_20250722_00001.xml</FileRow>
          <FileRow $sel><EdgeIcon /> ACPO107_03531165_62173620_20250722_00002.xml</FileRow>
        </FileList>
        <HScroll>
          <HThumb />
          <Chevron rotate={180} size={9} color="#444" />
          <Chevron size={9} color="#444" />
        </HScroll>
      </Files>
    </ExBody>
    <ExStatus>
      2 itens
      <VLine $h={14} $m={9} />
      <StatusTail $ml={1}>1 item selecionado</StatusTail>
      <StatusTail $ml={5}>159 bytes</StatusTail>
      <VLine $h={14} $m={9} />
      <ViewBtns>
        <ViewBtn $on><DetailsIcon /></ViewBtn>
        <ViewBtn><LargeIcon /></ViewBtn>
      </ViewBtns>
    </ExStatus>
  </Explorer>
);

const App = () => (
  <Screen>
    <Global />
    <Win>
      <TitleBar>
        <LogoIcon />
        <TitleText>Geração Serasa</TitleText>
        <CloseBtn><CloseGlyph /></CloseBtn>
      </TitleBar>
      <Toolbar>
        <ToolItem $w={46} $mr={13}><ReturnIcon /><span>Retornar</span></ToolItem>
        <ToolItem $w={45} $mr={15}><SearchIcon /><span><u>L</u>ocalizar</span></ToolItem>
        <ToolItem $w={31} $mr={11}><GridIcon /><span><u>G</u>rade</span></ToolItem>
        <DropMark />
        <ToolItem $w={41}><DocIcon /><span>Retorno</span></ToolItem>
      </Toolbar>
      <TabStrip $h={21} $left={6} $gap={3}>
        <Tab $active $w={91}><u>1</u> Remessa Serasa</Tab>
        <Tab $w={44}><u>3</u> Retorno</Tab>
      </TabStrip>
      <Panel>
        <Group $w={1224} $h={64} $pad="0 0 0 1px">
          <Legend $h={11} $lh={17}>Filtros para Localizar os Títulos</Legend>
          <RowBoxes $top={7}>
            <Group $w={108} $h={44}>
              <Legend>Remessa Pefin/Relato</Legend>
              <DateRow $left={3}>
                <Combo $w={101} $bold>
                  Relato
                  <ComboArrow />
                </Combo>
              </DateRow>
            </Group>
            <Group $w={130} $h={44}>
              <Legend>Títulos</Legend>
              <RadioGrid>
                <Radio on>Abertos</Radio>
                <Radio>Vencidos</Radio>
                <Radio>Baixados</Radio>
                <Radio>Todos</Radio>
              </RadioGrid>
            </Group>
            <Group $w={218} $h={44}>
              <Legend>
                <LegendRadios>
                  Período
                  <Radio on>Emissão</Radio>
                  <Radio>Lançto</Radio>
                  <Radio>Prev. Pagto</Radio>
                </LegendRadios>
              </Legend>
              <DateRange from="01/06/2025" to="30/06/2025" toW={76} />
            </Group>
            <Group $w={218} $h={44} $ml={-1}>
              <Legend>Período de Vencimento</Legend>
              <DateRange from={BLANK_DATE} to={BLANK_DATE} />
            </Group>
            <Group $w={208} $h={44}>
              <Legend>Período de Baixa</Legend>
              <DateRange from={BLANK_DATE} to={BLANK_DATE} />
            </Group>
            <Group $w={107} $h={44} $ml={2}>
              <Legend>Serasa</Legend>
              <DateRow $left={1}>
                <Combo $w={76}>
                  Todos
                  <ComboArrow />
                </Combo>
              </DateRow>
            </Group>
          </RowBoxes>
        </Group>
      </Panel>
      <TabStrip $h={20} $left={7}>
        <Tab $active $w={37}>Relato</Tab>
      </TabStrip>
      <Panel>
        <Group $w={1225} $h={60} $mt={3} $pad="0 0 0 1px">
          <Legend $ml={6} $lh={17}>Informações para Geração Relato</Legend>
          <RowBoxes $top={5}>
            <Group $w={182} $h={40}>
              <Legend>Inclusão/Exclusão</Legend>
              <RadioRow>
                <Radio gap={5}>Nenhum</Radio>
                <Radio on gap={5}>Inclusão</Radio>
                <Radio gap={5}>Exclusão</Radio>
              </RadioRow>
            </Group>
            <Group $w={141} $h={40}>
              <Legend>Periodicidade</Legend>
              <DateRow $left={4} $top={3}>
                <Combo $w={126}>
                  Selecione...
                  <ComboArrow />
                </Combo>
              </DateRow>
            </Group>
            <Group $w={108} $h={40}>
              <Legend>Remessa</Legend>
              <DateRow $left={5} $top={3}>
                <Combo $w={97}>
                  Normal
                  <ComboArrow />
                </Combo>
              </DateRow>
            </Group>
            <Action $w={74} $mt={-1} $ml={100}>
              <DocIcon />
              <span><u>G</u>erar</span>
            </Action>
            <Action $w={105} $mt={0} $ml={5} $hot>
              <DocIcon fill="#f6f27a" dot="#3aa845" />
              <span>Gerar <u>A</u>CPO107</span>
            </Action>
          </RowBoxes>
        </Group>
      </Panel>
      <TabStrip $h={20} $left={6} $gap={3}>
        <Tab $active $w={47}><u>4</u> Títulos</Tab>
        <Tab $w={44}><u>5</u> Seleção</Tab>
      </TabStrip>
      <CheckRow>
        <Box />
        Selecionar Todas
      </CheckRow>
      <DataGrid>
        <GroupBand>Arraste um título de coluna aqui para criar um grupo</GroupBand>
        <Row $h={16}>
          {headers.map((h, i) => (
            <HeadCell key={i} $align={i === 1 ? 'center' : 'left'}>{h}</HeadCell>
          ))}
        </Row>
        {rows.map((r, i) => (
          <Row $h={17.16} key={i}>
            <Cell $bg="#a6c8ee" $justify="center">{i === 0 && <Pointer />}</Cell>
            <Cell $justify="center"><Box /></Cell>
            <Cell />
            <Cell>0010</Cell>
            <Cell>{r[0]}</Cell>
            <Cell><Ball /><BallLabel>Nenhum</BallLabel></Cell>
            <Cell $justify="flex-end">{r[1]}</Cell>
            <Cell>{r[2]}</Cell>
            <Cell />
            <Cell />
            <Cell />
            <Cell />
            <Cell>{r[3]}</Cell>
          </Row>
        ))}
        <FootBar>
          <FootStub />
          <FootBox $col="5" $ml={3} $align="center">Títulos : 24</FootBox>
          <FootBox $col="10" $ml={0}>R$ 0,00</FootBox>
        </FootBar>
      </DataGrid>
    </Win>
    <StatusBar>
      <StatusCell $w={123} $left={13} $size={11.5} $line>22/7/2025 Jul/2025</StatusCell>
      <StatusCell $w={294} $left={4} $gap={8} $line $color="#111">
        <HeadsetIcon />
        <AtSign>@</AtSign>
        <FaInstagramSquare size={14} />
        <FaLinkedinIn size={14} />
        <FaYoutube size={15} />
        <FaTwitter size={14} />
        <FaFacebookSquare size={14} />
        <TeoremaLogo />
        <CapIcon />
        <TeoremaLink>Teorema Sistemas</TeoremaLink>
      </StatusCell>
      <StatusCell $w={195} $left={3} $size={10.9} $line>Gestão Administrativa - v.24.11a07.22a</StatusCell>
      <StatusCell $w={566} $size={10.3} $justify="center" $line>0010 CALCADOS CARTOM LTDA</StatusCell>
      <StatusCell $left={4} $size={10.5}>Reg: CALCADOS CARTOM</StatusCell>
    </StatusBar>
    <BlackEdge />
    <ExplorerWindow />
    <ViewerTab><ViewerIcon /></ViewerTab>
  </Screen>
);

export default App;
